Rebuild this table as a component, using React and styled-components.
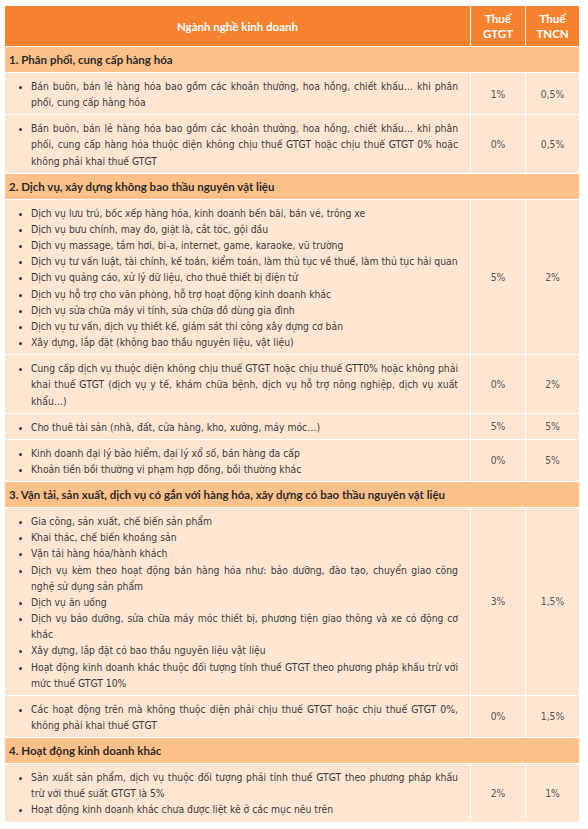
import styled, { createGlobalStyle } from 'styled-components';

const GlobalStyle = createGlobalStyle`
  body {
    margin: 0;
    background: #fff;
  }
`;

const Wrapper = styled.div`
  padding: 6px 9px 8px 4px;
`;

const Table = styled.table`
  width: 575px;
  table-layout: fixed;
  border-collapse: collapse;
  font-family: 'DejaVu Sans Condensed', 'DejaVu Sans', Verdana, sans-serif;
  font-stretch: condensed;
  font-size: 10.3px;
  color: #3a3a3a;
`;

const Col = styled.col`
  width: ${(p) => p.$w};
`;

const HeadCell = styled.th`
  background: #f5822e;
  color: #fff;
  font-family: Lato, 'Open Sans', sans-serif;
  font-weight: 700;
  font-size: 11.5px;
  line-height: 15px;
  height: 40px;
  padding: 0 4px;
  text-align: center;
  border: 1px solid #fff;
  border-top: none;
`;

const SectionCell = styled.td`
  background: #fec18a;
  color: #2b2b2b;
  font-family: Lato, 'Open Sans', sans-serif;
  font-weight: 700;
  font-size: 11.5px;
  line-height: 16px;
  padding: 5px 4px 4px;
  border: 1px solid #fff;
`;

const Cell = styled.td`
  background: #fee6d3;
  border: 1px solid #fff;
  padding: 5px 10px 4px 8px;
  line-height: 16.15px;
  vertical-align: middle;
`;

const RateCell = styled(Cell)`
  text-align: center;
  padding: 0;
  color: #555;
`;

const List = styled.ul`
  margin: 0;
  padding-left: 18px;
  padding-right: ${(p) => (p.$justify ? '2px' : '0')};
  text-align: ${(p) => (p.$justify ? 'justify' : 'left')};
  li::marker {
    font-size: 9px;
  }
`;

const sections = [
  {
    title: '1. Phân phối, cung cấp hàng hóa',
    rows: [
      {
        items: ['Bán buôn, bán lẻ hàng hóa bao gồm các khoản thưởng, hoa hồng, chiết khấu… khi phân phối, cung cấp hàng hóa'],
        justify: true,
        vat: '1%',
        pit: '0,5%',
      },
      {
        items: ['Bán buôn, bán lẻ hàng hóa bao gồm các khoản thưởng, hoa hồng, chiết khấu… khi phân phối, cung cấp hàng hóa thuộc diện không chịu thuế GTGT hoặc chịu thuế GTGT 0% hoặc không phải khai thuế GTGT'],
        justify: true,
        vat: '0%',
        pit: '0,5%',
      },
    ],
  },
  {
    title: '2. Dịch vụ, xây dựng không bao thầu nguyên vật liệu',
    rows: [
      {
        items: [
          'Dịch vụ lưu trú, bốc xếp hàng hóa, kinh doanh bến bãi, bán vé, trông xe',
          'Dịch vụ bưu chính, may đo, giặt là, cắt tóc, gội đầu',
          'Dịch vụ massage, tắm hơi, bi-a, internet, game, karaoke, vũ trường',
          'Dịch vụ tư vấn luật, tài chính, kế toán, kiểm toán, làm thủ tục về thuế, làm thủ tục hải quan',
          'Dịch vụ quảng cáo, xử lý dữ liệu, cho thuê thiết bị điện tử',
          'Dịch vụ hỗ trợ cho văn phòng, hỗ trợ hoạt động kinh doanh khác',
          'Dịch vụ sửa chữa máy vi tính, sửa chữa đồ dùng gia đình',
          'Dịch vụ tư vấn, dịch vụ thiết kế, giám sát thi công xây dựng cơ bản',
          'Xây dựng, lắp đặt (không bao thầu nguyên liệu, vật liệu)',
        ],
        vat: '5%',
        pit: '2%',
      },
      {
        items: ['Cung cấp dịch vụ thuộc diện không chịu thuế GTGT hoặc chịu thuế GTT0% hoặc không phải khai thuế GTGT (dịch vụ y tế, khám chữa bệnh, dịch vụ hỗ trợ nông nghiệp, dịch vụ xuất khẩu…)'],
        justify: true,
        vat: '0%',
        pit: '2%',
      },
      {
        items: ['Cho thuê tài sản (nhà, đất, cửa hàng, kho, xưởng, máy móc…)'],
        vat: '5%',
        pit: '5%',
      },
      {
        items: [
          'Kinh doanh đại lý bảo hiểm, đại lý xổ số, bán hàng đa cấp',
          'Khoản tiền bồi thường vi phạm hợp đồng, bồi thường khác',
        ],
        vat: '0%',
        pit: '5%',
      },
    ],
  },
  {
    title: '3. Vận tải, sản xuất, dịch vụ có gắn với hàng hóa, xây dựng có bao thầu nguyên vật liệu',
    rows: [
      {
        items: [
          'Gia công, sản xuất, chế biến sản phẩm',
          'Khai thác, chế biến khoáng sản',
          'Vận tải hàng hóa/hành khách',
          'Dịch vụ kèm theo hoạt động bán hàng hóa như: bảo dưỡng, đào tạo, chuyển giao công nghệ sử dụng sản phẩm',
          'Dịch vụ ăn uống',
          'Dịch vụ bảo dưỡng, sửa chữa máy móc thiết bị, phương tiện giao thông và xe có động cơ khác',
          'Xây dựng, lắp đặt có bao thầu nguyên liệu vật liệu',
          'Hoạt động kinh doanh khác thuộc đối tượng tính thuế GTGT theo phương pháp khấu trừ với mức thuế GTGT 10%',
        ],
        justify: true,
        vat: '3%',
        pit: '1,5%',
      },
      {
        items: ['Các hoạt động trên mà không thuộc diện phải chịu thuế GTGT hoặc chịu thuế GTGT 0%, không phải khai thuế GTGT'],
        justify: true,
        vat: '0%',
        pit: '1,5%',
      },
    ],
  },
  {
    title: '4. Hoạt động kinh doanh khác',
    rows: [
      {
        items: [
          'Sản xuất sản phẩm, dịch vụ thuộc đối tượng phải tính thuế GTGT theo phương pháp khấu trừ với thuế suất GTGT là 5%',
          'Hoạt động kinh doanh khác chưa được liệt kê ở các mục nêu trên',
        ],
        justify: true,
        vat: '2%',
        pit: '1%',
      },
    ],
  },
];

export default function App() {
  return (
    <Wrapper>
      <GlobalStyle />
      <Table>
        <colgroup>
          <Col $w="466px" />
          <Col $w="55px" />
          <Col $w="54px" />
        </colgroup>
        <thead>
          <tr>
            <HeadCell>Ngành nghề kinh doanh</HeadCell>
            <HeadCell>
              Thuế
              <br />
              GTGT
            </HeadCell>
            <HeadCell>
              Thuế
              <br />
              TNCN
            </HeadCell>
          </tr>
        </thead>
        <tbody>
          {sections.map((s) => (
            <Section key={s.title} section={s} />
          ))}
        </tbody>
      </Table>
    </Wrapper>
  );
}

function Section({ section }) {
  return (
    <>
      <tr>
        <SectionCell colSpan={3}>{section.title}</SectionCell>
      </tr>
      {section.rows.map((r, i) => (
        <tr key={i}>
          <Cell>
            <List $justify={r.justify}>
              {r.items.map((t) => (
                <li key={t}>{t}</li>
              ))}
            </List>
          </Cell>
          <RateCell>{r.vat}</RateCell>
          <RateCell>{r.pit}</RateCell>
        </tr>
      ))}
    </>
  );
}
